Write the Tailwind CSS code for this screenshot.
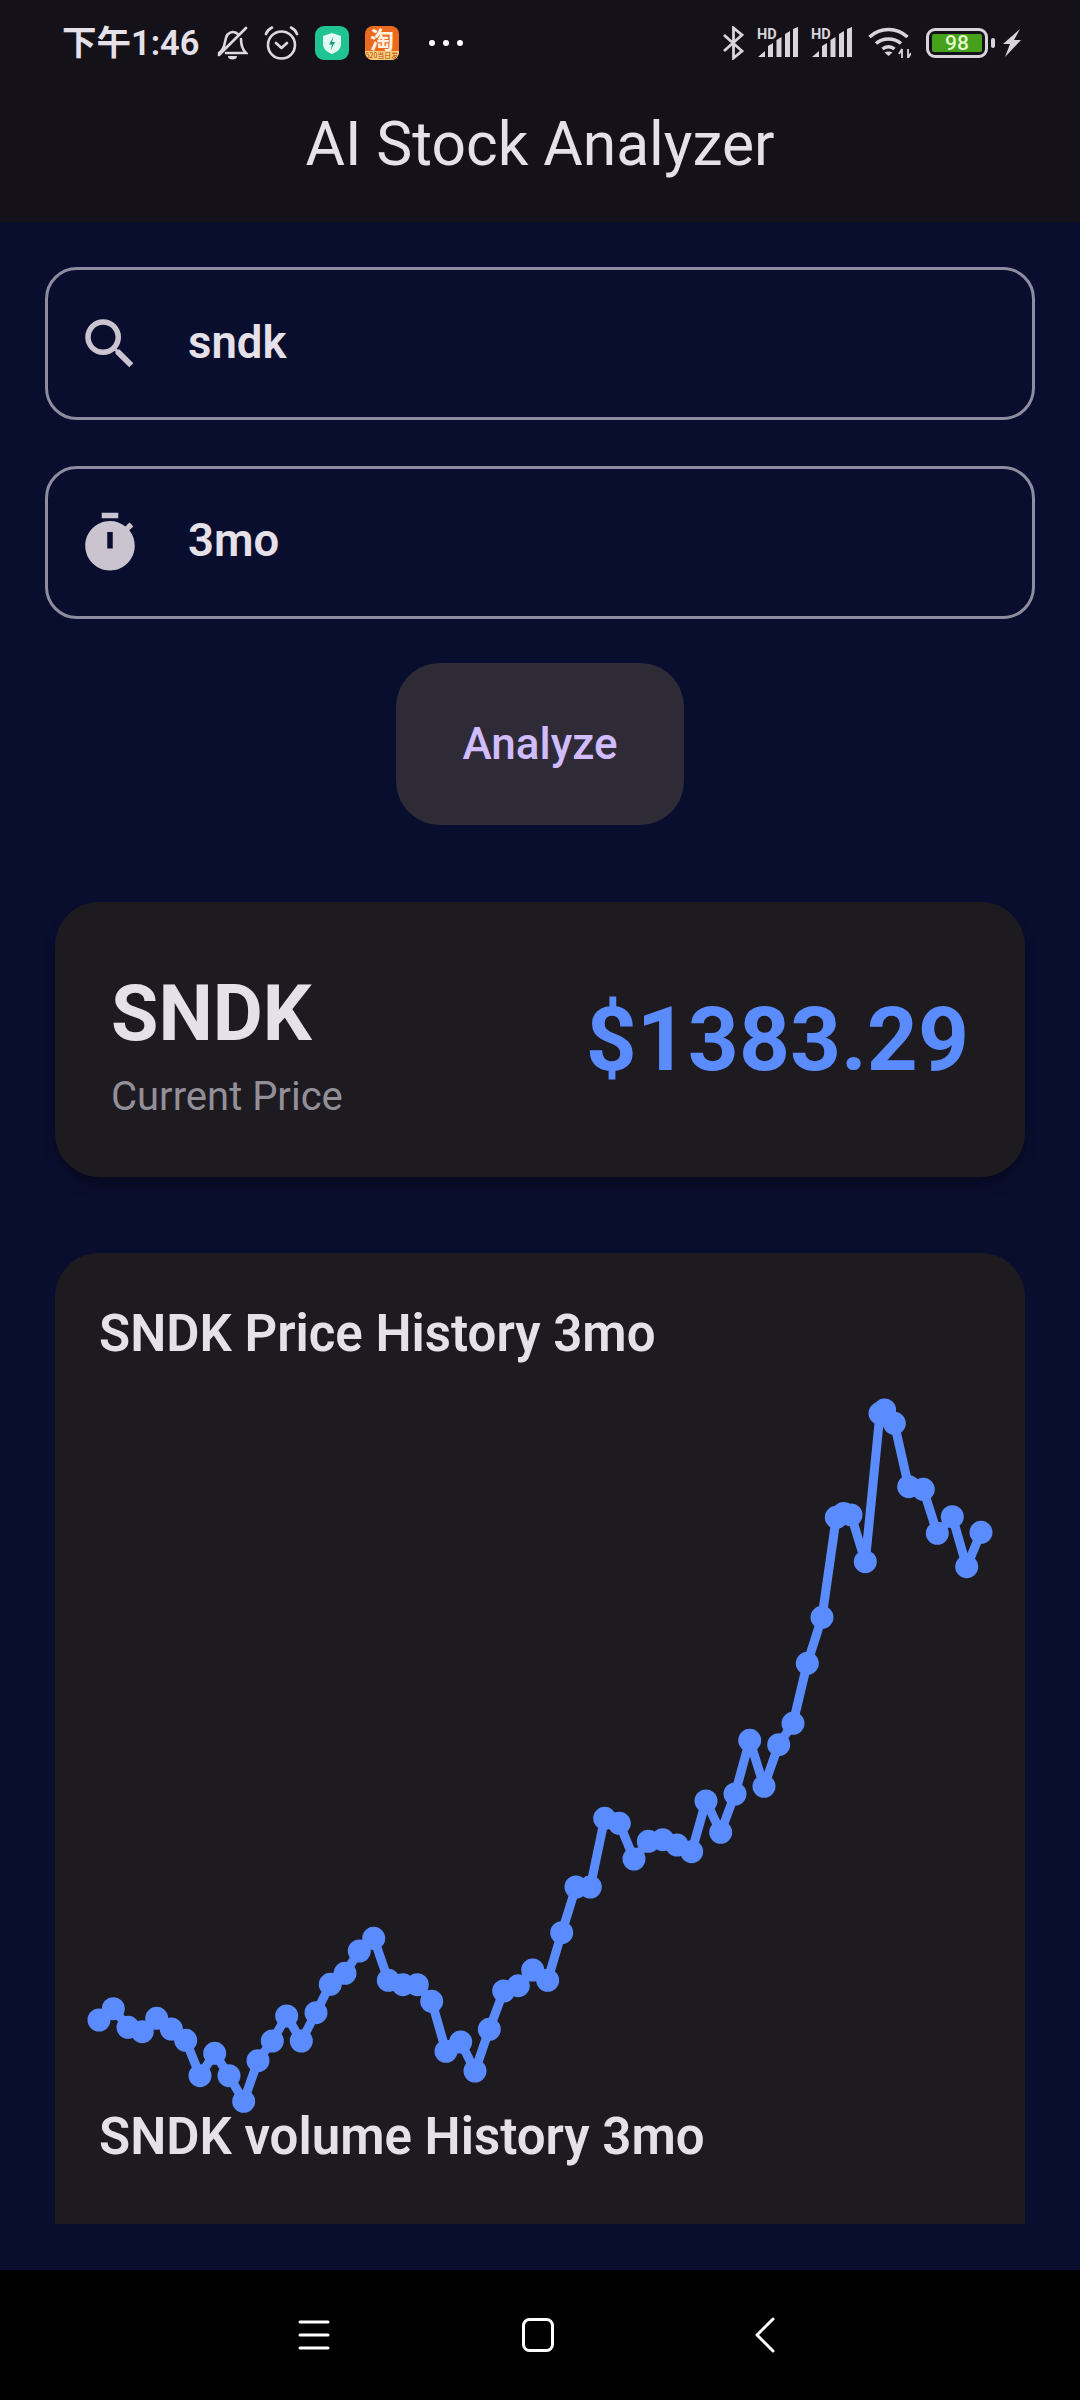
<!DOCTYPE html>
<html><head><meta charset="utf-8"><script src="https://cdn.jsdelivr.net/npm/@tailwindcss/browser@4"></script></head>
<body class="m-0 bg-black">
<div class="w-[1080px] h-[2400px] flex flex-col overflow-hidden font-['Roboto',sans-serif] text-[#e6e0e9]">
  <header class="h-[222px] shrink-0 bg-[#141218] flex flex-col">
    <div class="h-[84px] flex items-center pl-[62px] pt-[1px] text-[#e6e0e9]">
      <span class="w-[136px] text-[34.500px] leading-[40px] font-semibold whitespace-nowrap font-['Roboto','Noto_Sans_CJK_SC',sans-serif]">下午1:46</span>
      <svg class="ml-[18px] w-[32px] h-[34px]" viewBox="0 0 32 34" fill="none" stroke="#dcd8df" stroke-width="2.600"><path d="M3 27c3-2 5-4 6-11 1-7 4-10 8-10 2 0 4 1 6 3M25 13c0 7 2 11 5 14H10M30 2 3 29" stroke-linecap="round"/><path d="M12 30h9a4.500 3.500 0 0 1-9 0z" fill="#dcd8df" stroke="none"/></svg>
      <svg class="ml-[16px] w-[35px] h-[34px]" viewBox="0 0 35 34" fill="none" stroke="#dcd8df" stroke-width="2.600" stroke-linecap="round" stroke-linejoin="round"><circle cx="17.500" cy="19" r="13.500"/><path d="M12 17l5.500 5 5.500-5M2 8c1-3 3-5 6-6.500M33 8c-1-3-3-5-6-6.500"/></svg>
      <svg class="ml-[16px] w-[34px] h-[34px]" viewBox="0 0 34 34"><rect width="34" height="34" rx="9" fill="#1fc492"/><path d="M17 7l9 3v8c0 5-4 8-9 10-5-2-9-5-9-10v-8z" fill="#e4fbf3"/><path d="M18.500 10.500l-4.500 8h3l-1.500 6 4.500-8.500h-3z" fill="#1b9e78"/></svg>
      <div class="ml-[16px] w-[34px] h-[34px] rounded-[8px] bg-[#ec6a1e] flex flex-col items-center">
        <span class="h-[25px] text-[24px] leading-[25px] font-bold text-[#fff3e0] font-['Noto_Sans_CJK_SC',sans-serif]">淘</span>
        <span class="w-full h-[9px] rounded-b-[8px] bg-[#f6cf7a] text-center text-[7px] leading-[9px] text-[#c2410c] font-['Noto_Sans_CJK_SC',sans-serif] whitespace-nowrap">520当日发</span>
      </div>
      <div class="ml-[30px] flex gap-[8px]"><i class="block w-[6px] h-[6px] rounded-full bg-white"></i><i class="block w-[6px] h-[6px] rounded-full bg-white"></i><i class="block w-[6px] h-[6px] rounded-full bg-white"></i></div>
      <svg class="ml-[260px] w-[21px] h-[34px]" viewBox="0 0 21 34" fill="none" stroke="#d8d4dc" stroke-width="2.800"><path d="M1 9l18 16-8.500 7V2L19 9 1 25"/></svg>
      <svg class="ml-[13px] w-[41px] h-[31px]" viewBox="0 0 41 31" fill="#d8d4dc"><text x="0" y="11.500" font-size="14.500" font-weight="700" font-family="Roboto">HD</text><path d="M1 30l7-6v6zM11 19l5-3v14h-5zM19.500 13l5-3v20h-5zM28 7l5-3v26h-5zM36 2l5-2v30h-5z"/></svg>
      <svg class="ml-[13px] w-[41px] h-[31px]" viewBox="0 0 41 31" fill="#d8d4dc"><text x="0" y="11.500" font-size="14.500" font-weight="700" font-family="Roboto">HD</text><path d="M1 30l7-6v6zM11 19l5-3v14h-5zM19.500 13l5-3v20h-5zM28 7l5-3v26h-5zM36 2l5-2v30h-5z"/></svg>
      <svg class="ml-[16px] w-[43px] h-[31px]" viewBox="0 0 43 31" fill="none" stroke="#d8d4dc" stroke-width="3.600"><path d="M1.500 10c11-10 27-10 38 0M8 16.500c7-6 18-6 25 0M14.500 22c3.500-3 8.500-3 12 0"/><path d="M20.500 29l-4-3.500c2-1.500 6-1.500 8 0z" fill="#d8d4dc" stroke="none"/><path d="M34 22v9M40 22v9M34 22l-3 5M40 31l3-5" stroke-width="1.800"/></svg>
      <div class="ml-[15px] w-[62px] h-[30px] rounded-[9px] border-[3px] border-[#d8d4dc] p-[3px]"><div class="w-full h-full bg-[#46a11c] rounded-[2px] flex items-center justify-center text-[21px] leading-[18px] font-medium text-[#e3fbc8]">98</div></div>
      <div class="ml-[3px] w-[4px] h-[10px] rounded-[2px] bg-[#d8d4dc]"></div>
      <svg class="ml-[8px] w-[18px] h-[28px]" viewBox="0 0 18 28" fill="#d8d4dc"><path d="M17 0 0 15h7L2 28l16-17h-7z"/></svg>
    </div>
    <h1 class="text-center text-[60.500px] leading-[72px] font-normal mt-[25px] text-[#e6e0e9]">AI Stock Analyzer</h1>
  </header>
  <main class="flex-1 min-h-0 bg-[#0a0e2e] overflow-hidden pt-[45px] flex flex-col">
    <div class="mx-[45px] h-[153px] shrink-0 rounded-[32px] border-[3px] border-[#8e8c9f] flex items-center pl-[29px]">
      <svg class="w-[66px] h-[66px] shrink-0" viewBox="0 0 24 24" fill="#cac4d0"><path d="M15.500 14h-.79l-.28-.27A6.471 6.471 0 0 0 16 9.500 6.500 6.500 0 1 0 9.500 16c1.610 0 3.090-.59 4.230-1.570l.27.28v.79l5 4.990L20.490 19l-4.990-5zm-6 0C7.010 14 5 11.990 5 9.500S7.010 5 9.500 5 14 7.010 14 9.500 11.990 14 9.500 14z"/></svg>
      <span class="ml-[45px] -mt-[1px] text-[45.500px] leading-[52px] font-semibold">sndk</span>
    </div>
    <div class="mx-[45px] mt-[46px] h-[153px] shrink-0 rounded-[32px] border-[3px] border-[#8e8c9f] flex items-center pl-[29px]">
      <svg class="w-[66px] h-[66px] shrink-0" viewBox="0 0 24 24" fill="#cac4d0" fill-rule="evenodd"><path d="M15 1H9v2h6V1zM19.030 7.390l1.420-1.420c-.43-.51-.9-.99-1.410-1.410l-1.420 1.420C16.070 4.740 14.120 4 12 4c-4.970 0-9 4.030-9 9s4.020 9 9 9 9-4.030 9-9c0-2.120-.74-4.070-1.970-5.610zM13 14h-2V8h2v6z"/></svg>
      <span class="ml-[45px] -mt-[3px] text-[45.500px] leading-[52px] font-semibold">3mo</span>
    </div>
    <div class="mt-[44px] mx-auto w-[288px] h-[162px] shrink-0 rounded-[44px] bg-[#2e2b37] flex items-center justify-center text-[#d0bcff] text-[44px] leading-[52px] font-medium">Analyze</div>
    <section class="mt-[77px] mx-[55px] h-[275px] shrink-0 rounded-[44px] bg-[#1d1b20] shadow-lg shadow-black/30 flex items-center justify-between pl-[56px] pr-[56px]">
      <div class="mt-[11px]">
        <div class="text-[77px] leading-[90px] font-bold text-[#e6e0e9]">SNDK</div>
        <div class="text-[40px] leading-[50px] mt-[13px] text-[#938f99]">Current Price</div>
      </div>
      <div class="text-[89px] leading-[104px] font-bold text-[#5b8cff] mt-[1px]">$1383.29</div>
    </section>
    <section class="mt-[76px] mx-[55px] flex-1 min-h-0 rounded-t-[44px] bg-[#1d1b20] overflow-hidden mb-[46px]">
      <h2 class="pt-[53px] pl-[44px] text-[51px] leading-[56px] font-semibold text-[#e6e0e9]">SNDK Price History 3mo</h2>
      <svg class="block mt-[18px] w-[970px] h-[729px] overflow-visible" viewBox="55 1380 970 729" fill="none" stroke="#5b8cff" stroke-linecap="round" stroke-linejoin="round">
        <polyline stroke-width="9" points="99,2020 113.300,2008.700 128,2027.300 142.300,2031.700 156.700,2018.300 171.300,2029 185.700,2040.300 200,2075.700 214.700,2053.300 229,2075.700 243.700,2101.300 258,2060.700 272.300,2041 286.700,2016 301.300,2041 316,2012.700 330.300,1984.300 345,1973.300 359.300,1951 373.700,1938.300 388.300,1980.300 403,1984.700 417.300,1984.700 431.700,2001.300 446,2051.300 460.700,2042 475,2071 489.300,2029.300 503.700,1991 518.300,1985.700 532.700,1970 547.700,1980.300 561.700,1932.700 576,1887 590.300,1887 604.700,1818.300 619.300,1823.300 634,1859 648.300,1841.300 662.700,1839.700 677,1845 691.700,1851.700 706,1801 720.700,1832.300 735,1794 749.700,1740.300 764,1786.300 778.700,1744.700 793,1723.300 807.300,1663.300 822,1617.300 836.300,1517.300 851,1515 865.300,1561.700 880,1413.300 894.300,1423.300 908.700,1486.700 923.300,1489.300 937.300,1533.300 952.300,1516.700 966.700,1566.700 981,1532.300"/>
        <path stroke-width="23" d="M99 2020h0M113.300 2008.700h0M128 2027.300h0M142.300 2031.700h0M156.700 2018.300h0M171.300 2029h0M185.700 2040.300h0M200 2075.700h0M214.700 2053.300h0M229 2075.700h0M243.700 2101.300h0M258 2060.700h0M272.300 2041h0M286.700 2016h0M301.300 2041h0M316 2012.700h0M330.300 1984.300h0M345 1973.300h0M359.300 1951h0M373.700 1938.300h0M388.300 1980.300h0M403 1984.700h0M417.300 1984.700h0M431.700 2001.300h0M446 2051.300h0M460.700 2042h0M475 2071h0M489.300 2029.300h0M503.700 1991h0M518.300 1985.700h0M532.700 1970h0M547.700 1980.300h0M561.700 1932.700h0M576 1887h0M590.300 1887h0M604.700 1818.300h0M619.300 1823.300h0M634 1859h0M648.300 1841.300h0M662.700 1839.700h0M677 1845h0M691.700 1851.700h0M706 1801h0M720.700 1832.300h0M735 1794h0M749.700 1740.300h0M764 1786.300h0M778.700 1744.700h0M793 1723.300h0M807.300 1663.300h0M822 1617.300h0M836.300 1517.300h0M843.700 1513.500h0M851 1515h0M865.300 1561.700h0M880 1413.300h0M884.600 1410h0M894.300 1423.300h0M908.700 1486.700h0M923.300 1489.300h0M937.300 1533.300h0M952.300 1516.700h0M966.700 1566.700h0M981 1532.300h0"/>
      </svg>
      <h2 class="pl-[44px] text-[51px] leading-[56px] font-semibold text-[#e6e0e9]">SNDK volume History 3mo</h2>
    </section>
  </main>
  <nav class="h-[130px] shrink-0 bg-black flex items-center pl-[298px]">
    <svg class="w-[32px] h-[30px]" viewBox="0 0 32 30" stroke="#fff" stroke-width="3" stroke-linecap="round" fill="none"><path d="M2 2h28M2 15h28M2 28h28"/></svg>
    <svg class="ml-[191px] w-[34px] h-[34px]" viewBox="0 0 34 34" stroke="#fff" stroke-width="3" fill="none"><rect x="2.500" y="1.500" width="29" height="31" rx="6"/></svg>
    <svg class="ml-[199px] w-[22px] h-[36px]" viewBox="0 0 22 36" stroke="#fff" stroke-width="3" stroke-linecap="round" stroke-linejoin="round" fill="none"><path d="M19 2 3 18l16 16"/></svg>
  </nav>
</div>
</body></html>
